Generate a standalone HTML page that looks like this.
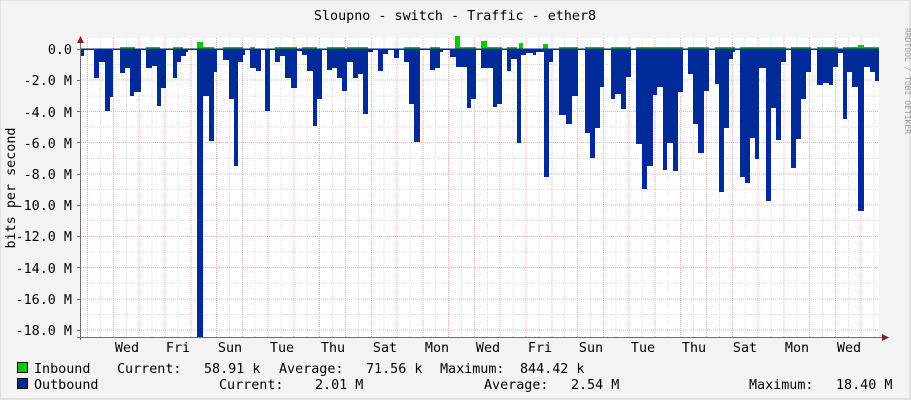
<!DOCTYPE html>
<html><head><meta charset="utf-8"><style>
html,body{margin:0;padding:0;background:#f3f3f3;}
svg{display:block;}
text{font-family:"DejaVu Sans Mono","Liberation Mono",monospace;font-size:13.4px;fill:#000;}
</style></head><body>
<svg width="911" height="400" viewBox="0 0 911 400" xmlns="http://www.w3.org/2000/svg">
<rect x="0" y="0" width="911" height="400" fill="#f3f3f3"/>
<rect x="0" y="0" width="910" height="399" fill="none" stroke="#cfcfcf" stroke-width="1"/>
<rect x="81" y="38" width="798" height="299" fill="#ffffff"/>
<g stroke-width="1" stroke-dasharray="1,1" shape-rendering="crispEdges">
<g stroke="#dcdcdc">
<path d="M81 64.6H879M81 95.8H879M81 127H879M81 158.3H879M81 189.5H879M81 220.7H879M81 251.9H879M81 283.2H879M81 314.4H879"/>
</g>
<g stroke="#f2b0b0">
<path d="M81 49.5H879M81 80.2H879M81 111.4H879M81 142.7H879M81 173.9H879M81 205.1H879M81 236.3H879M81 267.6H879M81 298.8H879M81 330H879"/>
</g>
<g stroke="#dcdcdc">
<path d="M100.5 38V337M126.3 38V337M152.1 38V337M177.9 38V337M203.6 38V337M229.4 38V337M255.2 38V337M281 38V337M306.8 38V337M332.6 38V337M358.4 38V337M384.2 38V337M409.9 38V337M435.7 38V337M461.5 38V337M487.3 38V337M513.1 38V337M538.9 38V337M564.7 38V337M590.5 38V337M616.2 38V337M642 38V337M667.8 38V337M693.6 38V337M719.4 38V337M745.2 38V337M771 38V337M796.8 38V337M822.5 38V337M848.3 38V337M874.1 38V337"/>
</g>
<g stroke="#f2b0b0">
<path d="M87.6 38V337M113.4 38V337M139.2 38V337M165 38V337M190.8 38V337M216.5 38V337M242.3 38V337M268.1 38V337M293.9 38V337M319.7 38V337M345.5 38V337M371.3 38V337M397.1 38V337M422.8 38V337M448.6 38V337M474.4 38V337M500.2 38V337M526 38V337M551.8 38V337M577.6 38V337M603.4 38V337M629.1 38V337M654.9 38V337M680.7 38V337M706.5 38V337M732.3 38V337M758.1 38V337M783.9 38V337M809.7 38V337M835.4 38V337M861.2 38V337"/>
</g>
</g>
<path fill="#00cc00" d="M120 47H135V49H120ZM146 47H160V49H146ZM173 47H183V49H173ZM197 42H203V49H197ZM203 47H214V49H203ZM223 47H243V49H223ZM250 47H255V49H250ZM275 47H297V49H275ZM302 47H317V49H302ZM327 47H345V49H327ZM347 47H368V49H347ZM404 47H420V49H404ZM430 47H440V49H430ZM455 36H460V49H455ZM460 47H476V49H460ZM481 41H487V49H481ZM487 47H502V49H487ZM507 47H517V49H507ZM519 43H523V49H519ZM543 44H548V49H543ZM559 47H578V49H559ZM585 47H604V49H585ZM611 47H631V49H611ZM636 47H683V49H636ZM688 47H709V49H688ZM715 47H735V49H715ZM740 47H786V49H740ZM791 47H811V49H791ZM817 47H838V49H817ZM843 47H858V49H843ZM858 45H864V49H858ZM864 47H879V49H864Z"/>
<path fill="#002a97" d="M81 49H84V56H81ZM94 49H99V78H94ZM99 49H105V62H99ZM105 49H110V111H105ZM110 49H113V97H110ZM113 49H115V50H113ZM120 49H125V73H120ZM125 49H130V68H125ZM130 49H134V96H130ZM134 49H141V92H134ZM141 49H146V50H141ZM146 49H152V68H146ZM152 49H157V66H152ZM157 49H161V106H157ZM161 49H166V88H161ZM166 49H173V50H166ZM173 49H177V78H173ZM177 49H181V62H177ZM181 49H186V56H181ZM186 49H188V52H186ZM197 49H203V337H197ZM203 49H209V96H203ZM209 49H214V141H209ZM214 49H217V72H214ZM217 49H223V50H217ZM223 49H229V60H223ZM229 49H234V99H229ZM234 49H238V166H234ZM238 49H243V62H238ZM243 49H245V55H243ZM250 49H256V68H250ZM256 49H261V71H256ZM261 49H265V50H261ZM265 49H270V111H265ZM275 49H280V62H275ZM280 49H285V56H280ZM285 49H291V78H285ZM291 49H297V88H291ZM297 49H302V51H297ZM302 49H307V55H302ZM307 49H313V71H307ZM313 49H317V126H313ZM317 49H322V99H317ZM327 49H332V70H327ZM332 49H337V68H332ZM337 49H342V78H337ZM342 49H347V91H342ZM347 49H353V62H347ZM353 49H358V78H353ZM358 49H363V74H358ZM363 49H368V114H363ZM368 49H373V52H368ZM378 49H383V71H378ZM383 49H388V54H383ZM394 49H399V58H394ZM404 49H409V62H404ZM409 49H414V104H409ZM414 49H420V142H414ZM430 49H435V70H430ZM435 49H440V68H435ZM440 49H443V52H440ZM450 49H456V57H450ZM456 49H467V67H456ZM467 49H471V108H467ZM471 49H476V99H471ZM481 49H493V68H481ZM493 49H497V107H493ZM497 49H502V104H497ZM507 49H511V71H507ZM511 49H517V59H511ZM517 49H521V143H517ZM521 49H526V55H521ZM526 49H533V53H526ZM533 49H536V55H533ZM536 49H544V52H536ZM544 49H549V177H544ZM549 49H553V62H549ZM559 49H566V115H559ZM566 49H572V124H566ZM572 49H578V96H572ZM585 49H590V133H585ZM590 49H595V158H590ZM595 49H600V128H595ZM600 49H604V87H600ZM611 49H615V99H611ZM615 49H621V94H615ZM621 49H626V109H621ZM626 49H631V77H626ZM636 49H642V144H636ZM642 49H647V189H642ZM647 49H653V166H647ZM653 49H657V95H653ZM657 49H663V87H657ZM663 49H667V170H663ZM667 49H673V143H667ZM673 49H678V171H673ZM678 49H683V92H678ZM688 49H693V74H688ZM693 49H698V124H693ZM698 49H704V153H698ZM704 49H709V91H704ZM715 49H719V84H715ZM719 49H724V192H719ZM724 49H729V128H724ZM729 49H733V59H729ZM733 49H735V52H733ZM740 49H745V177H740ZM745 49H750V183H745ZM750 49H755V138H750ZM755 49H759V159H755ZM759 49H766V68H759ZM766 49H771V201H766ZM771 49H776V108H771ZM776 49H781V140H776ZM781 49H786V62H781ZM791 49H796V168H791ZM796 49H801V139H796ZM801 49H806V99H801ZM806 49H811V72H806ZM817 49H823V85H817ZM823 49H829V83H823ZM829 49H833V85H829ZM833 49H838V67H833ZM838 49H843V53H838ZM843 49H847V119H843ZM847 49H852V72H847ZM852 49H858V87H852ZM858 49H864V211H858ZM864 49H870V67H864ZM870 49H875V72H870ZM875 49H879V81H875Z"/>
<rect x="81" y="48.5" width="798" height="1.5" fill="#002a97"/>
<g stroke="#6e6e6e" stroke-width="1" shape-rendering="crispEdges">
<path d="M80.5 42V340M77 337.5H884"/>
<path d="M77 49.5H81M77 80.5H81M77 111.5H81M77 142.5H81M77 174.5H81M77 205.5H81M77 236.5H81M77 267.5H81M77 299.5H81M77 330.5H81"/>
</g>
<path d="M77 43L80.5 36L84 43Z" fill="#8b1a1a"/>
<path d="M882 334L889 337.5L882 341Z" fill="#8b1a1a"/>
<text x="455" y="20" text-anchor="middle">Sloupno - switch - Traffic - ether8</text>
<text transform="translate(15,188) rotate(-90)" text-anchor="middle">bits per second</text>
<text x="905" y="28" transform="rotate(90 905 28)" style="font-size:8px;fill:#9a9a9a">RRDTOOL / TOBI OETIKER</text>
<g text-anchor="end">
<text x="72" y="54">0.0</text>
<text x="72" y="85">-2.0 M</text>
<text x="72" y="117">-4.0 M</text>
<text x="72" y="148">-6.0 M</text>
<text x="72" y="179">-8.0 M</text>
<text x="72" y="210">-10.0 M</text>
<text x="72" y="241">-12.0 M</text>
<text x="72" y="273">-14.0 M</text>
<text x="72" y="304">-16.0 M</text>
<text x="72" y="335">-18.0 M</text>
</g>
<g text-anchor="middle">
<text x="127" y="352">Wed</text><text x="178" y="352">Fri</text><text x="230" y="352">Sun</text><text x="282" y="352">Tue</text><text x="333" y="352">Thu</text><text x="385" y="352">Sat</text><text x="437" y="352">Mon</text><text x="488" y="352">Wed</text><text x="540" y="352">Fri</text><text x="591" y="352">Sun</text><text x="643" y="352">Tue</text><text x="694" y="352">Thu</text><text x="745" y="352">Sat</text><text x="797" y="352">Mon</text><text x="849" y="352">Wed</text>
</g>
<rect x="17.5" y="362.5" width="10" height="10" fill="#00cc00" stroke="#000"/>
<rect x="17.5" y="378.5" width="10" height="10" fill="#002a97" stroke="#000"/>
<text x="34" y="373">Inbound</text>
<text x="117" y="373">Current:</text>
<text x="204" y="373">58.91 k</text>
<text x="279" y="373">Average:</text>
<text x="366" y="373">71.56 k</text>
<text x="440" y="373">Maximum:</text>
<text x="520" y="373">844.42 k</text>
<text x="34" y="389">Outbound</text>
<text x="219" y="389">Current:</text>
<text x="315" y="389">2.01 M</text>
<text x="484" y="389">Average:</text>
<text x="571" y="389">2.54 M</text>
<text x="749" y="389">Maximum:</text>
<text x="836" y="389">18.40 M</text>
</svg>
</body></html>
